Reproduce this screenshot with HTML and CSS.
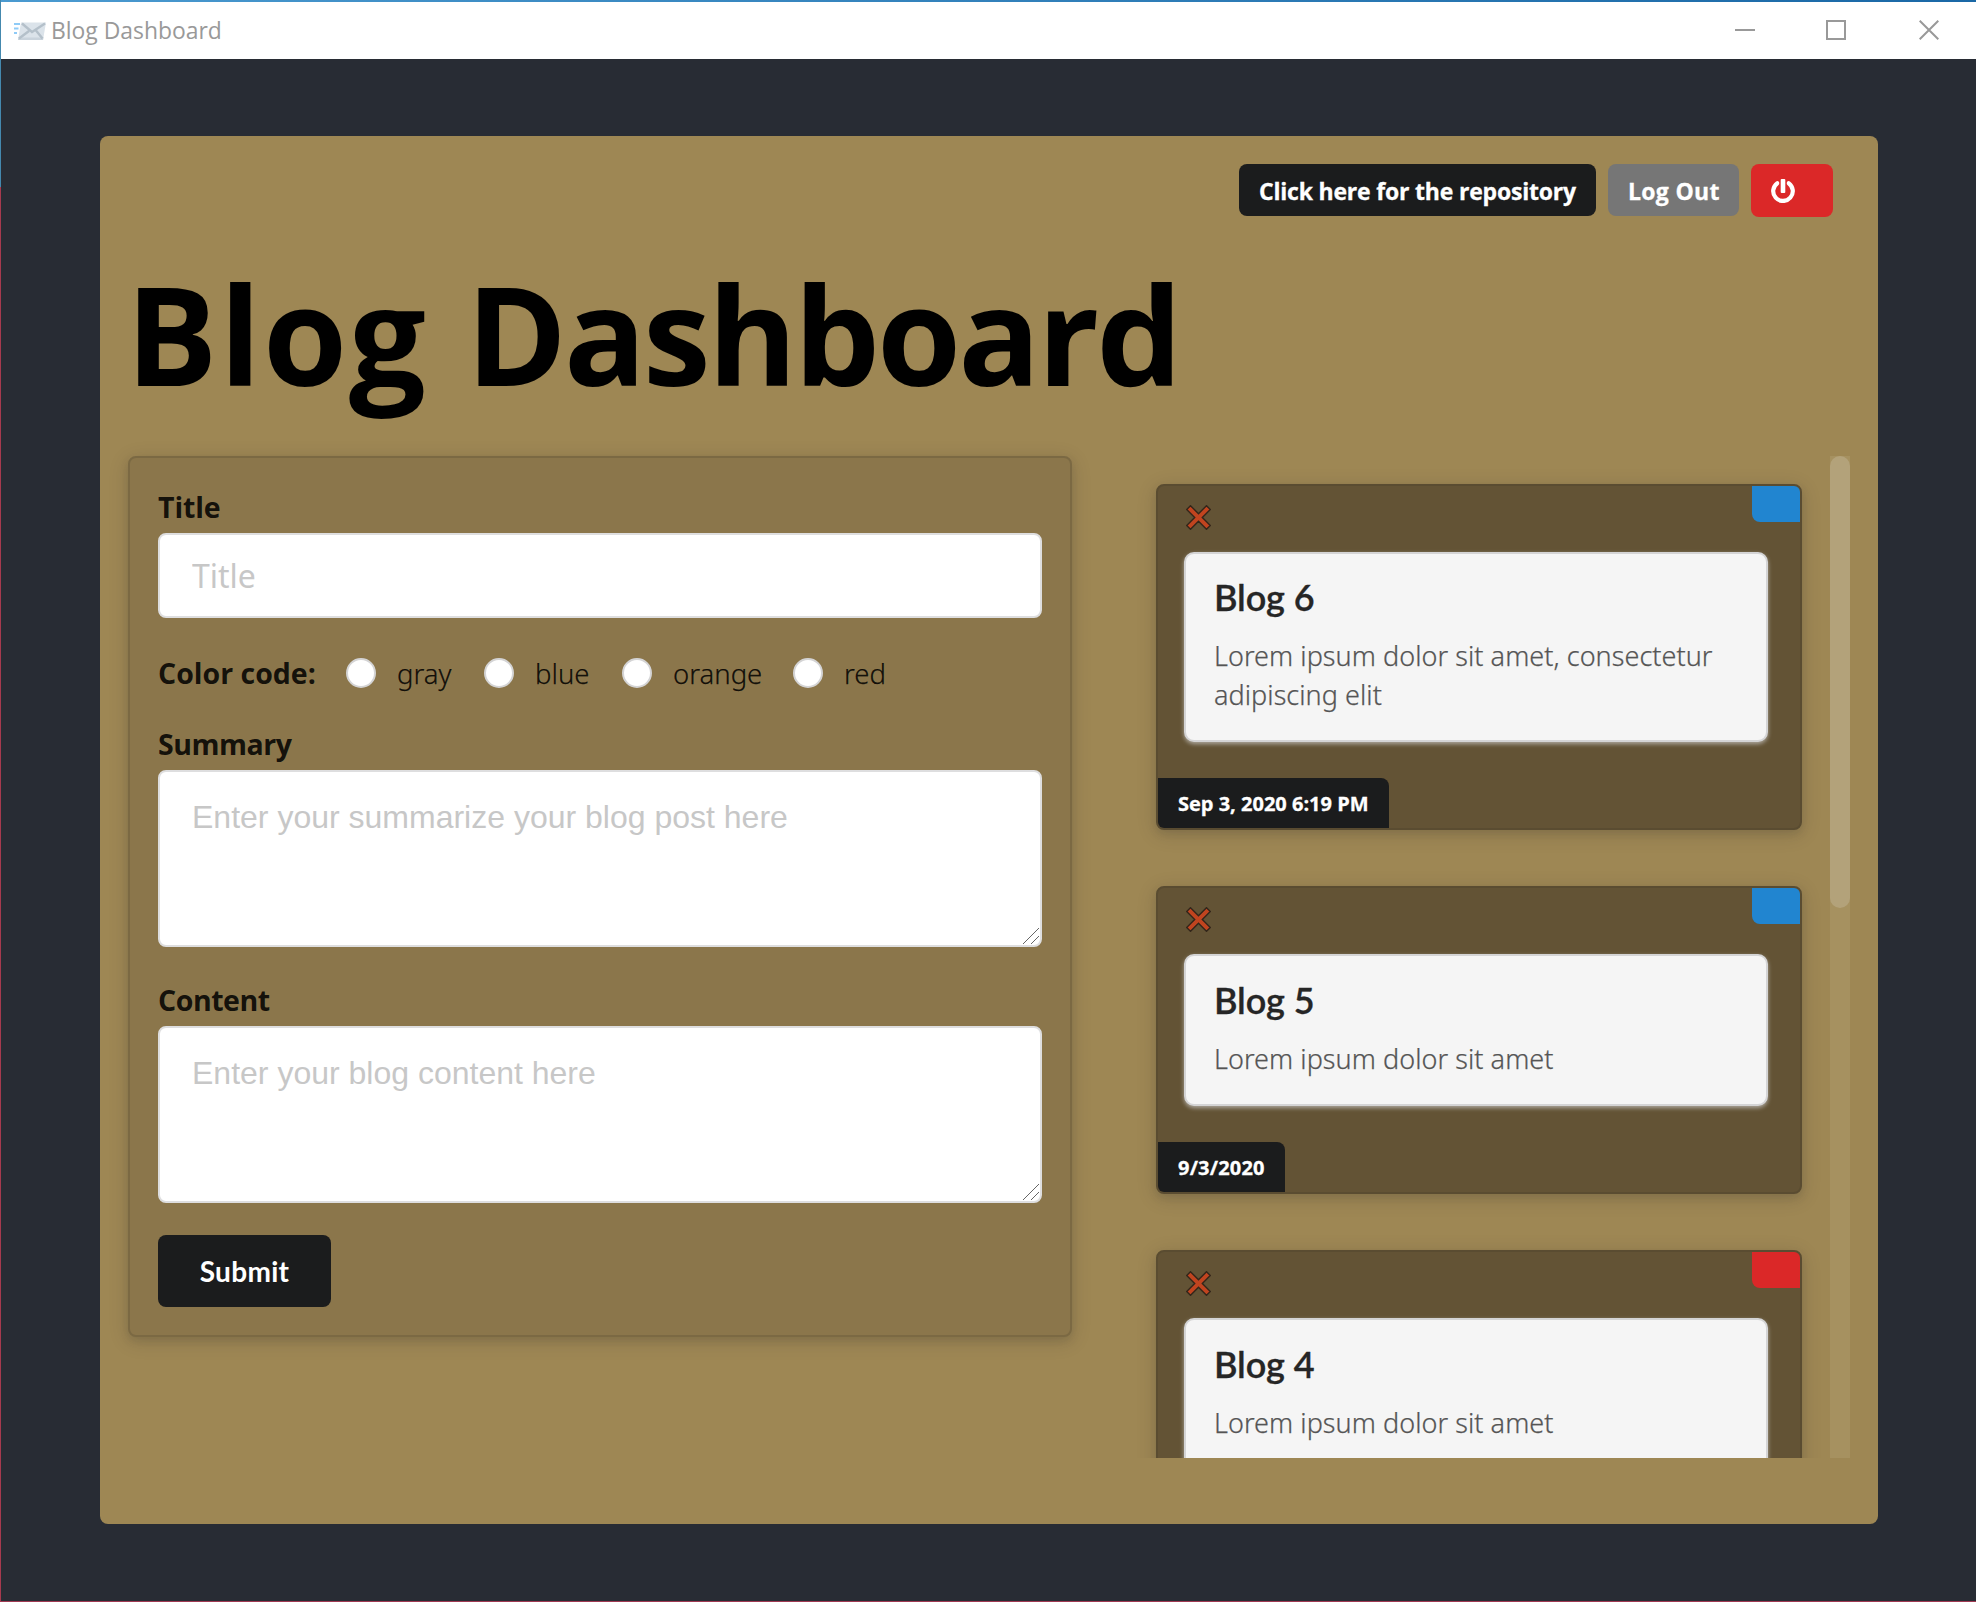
FILE: index.html
```html
<!DOCTYPE html>
<html lang="en">
<head>
<meta charset="utf-8">
<title>Blog Dashboard</title>
<link rel="stylesheet" href="styles.css">
</head>
<body>
<div class="window">
  <header class="titlebar">
    <svg class="app-icon" width="32" height="20" viewBox="0 0 32 20">
      <path d="M7 1.500h25l-3 17.500H4z" fill="#dbe3ea"/>
      <path d="M4.500 16.500h25l-.5 2.500H4z" fill="#c9d3dc"/>
      <path d="M8 2.500l10 8.500L31 2.500M5 17.500l10-7.500M28.500 17.500L22 9.500" fill="none" stroke="#b4c0ca" stroke-width="2.400"/>
      <path d="M0 3h6M0 7.500h4.500M0 12h3" stroke="#8fcbf7" stroke-width="2"/>
    </svg>
    <span class="window-title">Blog Dashboard</span>
    <div class="window-controls">
      <svg width="20" height="20" viewBox="0 0 20 20"><path d="M0 10h20"/></svg>
      <svg width="20" height="20" viewBox="0 0 20 20"><path d="M1 1h18v18H1z"/></svg>
      <svg width="20" height="20" viewBox="0 0 20 20"><path d="M.7.7l18.600 18.600M19.300.7L.7 19.300"/></svg>
    </div>
  </header>

  <main class="panel">
    <nav class="actions">
      <a class="label black">Click here for the repository</a>
      <a class="label grey">Log Out</a>
      <a class="label red">
        <svg width="24" height="24" viewBox="0 0 24 24">
          <path d="M6.300 4.200a9.800 9.800 0 1 0 11.400 0" fill="none" stroke="#fff" stroke-width="4.200" stroke-linecap="round"/>
          <rect x="8.500" y="-1" width="7" height="13" fill="#db2828"/>
          <rect x="9.700" y="0" width="4.600" height="14" rx="1" fill="#fff"/>
        </svg>
      </a>
    </nav>
    <h1><span class="word-one">Blog</span> <span class="word-two">Dashboard</span></h1>

    <div class="columns">
      <form class="segment">
        <label class="field-label title-label" for="title">Title</label>
        <input class="control title-input" id="title" type="text" placeholder="Title">
        <div class="radios">
          <span class="field-label">Color code:</span>
          <label class="radio gray"><i></i>gray</label>
          <label class="radio blue"><i></i>blue</label>
          <label class="radio orange"><i></i>orange</label>
          <label class="radio"><i></i>red</label>
        </div>
        <label class="field-label" for="summary">Summary</label>
        <div class="area">
          <textarea class="control" id="summary" placeholder="Enter your summarize your blog post here"></textarea>
          <svg class="grip" width="16" height="16" viewBox="0 0 16 16"><path d="M0 16L16 0M8 16l8-8"/></svg>
        </div>
        <label class="field-label" for="content">Content</label>
        <div class="area">
          <textarea class="control" id="content" placeholder="Enter your blog content here"></textarea>
          <svg class="grip" width="16" height="16" viewBox="0 0 16 16"><path d="M0 16L16 0M8 16l8-8"/></svg>
        </div>
        <button class="submit" type="button">Submit</button>
      </form>

      <section class="posts">
        <article class="post">
          <div class="post-top">
            <svg class="remove" width="25" height="25" viewBox="0 0 25 25"><path d="M4.500.7L12.500 8.700 20.500.7 24.300 4.500 16.300 12.500 24.300 20.500 20.500 24.300 12.500 16.300 4.500 24.300.7 20.500 8.700 12.500.7 4.500z"/></svg>
            <span class="tag blue-tag"></span>
          </div>
          <div class="card"><h2>Blog 6</h2><p>Lorem ipsum dolor sit amet, consectetur adipiscing elit</p></div>
          <span class="date">Sep 3, 2020 6:19 PM</span>
        </article>
        <article class="post">
          <div class="post-top">
            <svg class="remove" width="25" height="25" viewBox="0 0 25 25"><path d="M4.500.7L12.500 8.700 20.500.7 24.300 4.500 16.300 12.500 24.300 20.500 20.500 24.300 12.500 16.300 4.500 24.300.7 20.500 8.700 12.500.7 4.500z"/></svg>
            <span class="tag blue-tag"></span>
          </div>
          <div class="card"><h2>Blog 5</h2><p>Lorem ipsum dolor sit amet</p></div>
          <span class="date short">9/3/2020</span>
        </article>
        <article class="post">
          <div class="post-top">
            <svg class="remove" width="25" height="25" viewBox="0 0 25 25"><path d="M4.500.7L12.500 8.700 20.500.7 24.300 4.500 16.300 12.500 24.300 20.500 20.500 24.300 12.500 16.300 4.500 24.300.7 20.500 8.700 12.500.7 4.500z"/></svg>
            <span class="tag red-tag"></span>
          </div>
          <div class="card"><h2>Blog 4</h2><p>Lorem ipsum dolor sit amet</p></div>
        </article>
      </section>
      <div class="scrollbar"><div class="thumb"></div></div>
    </div>
  </main>
</div>
</body>
</html>
```
FILE: styles.css
```css
* { box-sizing: border-box; }

body {
  margin: 0;
  font-family: "Noto Sans", "Open Sans", sans-serif;
  color: rgba(0, 0, 0, .87);
}

.window {
  height: 1602px;
  border-bottom: 1px solid #a03a52;
  padding-left: 1px;
  background: linear-gradient(#4488ae 0 187px, #a63a4e 187px) 0 0 / 1px 100% no-repeat, #282c34;
  overflow: hidden;
}

.titlebar {
  display: flex;
  align-items: center;
  height: 59px;
  margin-left: -1px;
  padding: 2px 37px 0 13px;
  border-left: 1px solid #4488ae;
  background: linear-gradient(90deg, #4a9ad0, #1a68a6) 0 0 / 100% 2px no-repeat, #fff;
}

.window-title {
  margin: 1px 0 0 5px;
  font: 400 22.9px/30px "Open Sans", sans-serif;
  color: #999;
}

.window-controls {
  display: flex;
  gap: 71px;
  margin: 0 0 1px auto;
}

.window-controls svg {
  fill: none;
  stroke: #999;
  stroke-width: 2;
}

.window-controls svg:last-child { margin-left: 2px; }

.panel {
  width: 1778px;
  height: 1388px;
  margin: 77px 0 0 99px;
  padding: 28px;
  border-radius: 8px;
  background: #9e8754;
}

.actions {
  display: flex;
  gap: 12px;
  height: 53px;
  padding-right: 17px;
  justify-content: flex-end;
  align-items: flex-start;
}

.label {
  height: 52px;
  padding: 0 20px;
  border-radius: 8px;
  font: 700 23px/54px "Open Sans", sans-serif;
  -webkit-text-stroke: .3px;
  white-space: nowrap;
  color: #fff;
}

.label.black { width: 357px; background: #1b1c1d; letter-spacing: -.2px; }
.label.grey { width: 131px; background: #767676; letter-spacing: .3px; }
.label.red { display: block; width: 82px; height: 53px; background: #db2828; }
.label.red svg { display: block; margin-top: 15px; }

h1 {
  height: 239px;
  margin: 0 0 0 -2px;
  font: 700 136px/234px "Open Sans", sans-serif;
  white-space: nowrap;
  color: #000;
}

.word-one { letter-spacing: 2px; }
.word-two { margin-left: 3px; letter-spacing: -3px; }

.columns {
  display: flex;
  height: 1002px;
  align-items: flex-start;
}

.segment {
  display: flex;
  flex-direction: column;
  width: 944px;
  height: 881px;
  padding: 28px;
  border: 2px solid #7b6943;
  border-radius: 8px;
  background: #8b764b;
  box-shadow: 0 4px 8px rgba(34, 36, 38, .12), 0 4px 20px rgba(34, 36, 38, .15);
}

.field-label {
  height: 47px;
  font: 700 28.5px/42px "Open Sans", sans-serif;
  letter-spacing: -.45px;
}

.title-label { letter-spacing: -.1px; }

.area {
  position: relative;
  height: 177px;
  margin-bottom: 32px;
}

.control {
  display: block;
  flex: none;
  width: 884px;
  height: 177px;
  margin: 0;
  padding: 24px 32px;
  border: 2px solid #dededf;
  border-radius: 8px;
  background: #fff;
  font: 400 32px/42px "Liberation Sans", sans-serif;
  outline: 0;
  resize: none;
}

.grip {
  position: absolute;
  right: 3px;
  bottom: 3px;
  fill: none;
  stroke: #666;
  stroke-width: 1;
}

.title-input { height: 85px; margin-bottom: 32px; font-family: "Noto Sans", sans-serif; }
.control::placeholder { color: #c7c7c7; opacity: 1; }

.radios {
  display: flex;
  height: 73px;
  font: 330 27.5px/48px "Noto Sans", sans-serif;
  -webkit-text-stroke: .25px;
}

.radios .field-label { width: 188px; line-height: 47px; letter-spacing: 0; -webkit-text-stroke: 0; }

.radio { display: flex; }
.radio i {
  width: 30px;
  height: 30px;
  margin: 8px 21px 0 0;
  border: 2px solid #d4d4d5;
  border-radius: 50%;
  background: #fff;
}
.radio.gray, .radio.blue { width: 138px; }
.radio.orange { width: 171px; }

.submit {
  width: 173px;
  height: 72px;
  padding: 0;
  border: 0;
  border-radius: 8px;
  background: #1b1c1d;
  color: #fff;
  font: 700 28px/72px Lato, sans-serif;
  letter-spacing: .3px;
}

.posts {
  display: flex;
  flex-direction: column;
  gap: 56px;
  width: 758px;
  height: 1002px;
  padding: 28px 28px 0 84px;
  overflow: hidden;
}

.post {
  flex: none;
  width: 646px;
  border: 2px solid #5a4c31;
  border-radius: 8px;
  background: #635335;
  box-shadow: 0 4px 8px rgba(34, 36, 38, .12), 0 4px 20px rgba(34, 36, 38, .15);
  overflow: hidden;
}

.post-top {
  display: flex;
  justify-content: space-between;
  height: 66px;
  padding-left: 28px;
}

.remove { margin-top: 19px; fill: #c1441f; stroke: #33261a; stroke-width: 1.4; }

.tag { width: 48px; height: 36px; border-radius: 0 0 0 8px; }
.blue-tag { background: #2185d0; }
.red-tag { background: #db2828; }

.card {
  width: 584px;
  margin: 0 0 36px 26px;
  padding: 21px 28px 26px;
  border: 2px solid #d4d4d5;
  border-radius: 10px;
  background: #f5f5f5;
  box-shadow: 0 2px 4px #d4d4d5aa;
}

.card h2 {
  margin: 0;
  font: 600 36px/44px Lato, sans-serif;
  letter-spacing: -.1px;
  -webkit-text-stroke: .3px;
  color: #262626;
}

.card p {
  margin: 17px 0 0;
  font: 330 27px/39px "Noto Sans", sans-serif;
  letter-spacing: .05px;
  -webkit-text-stroke: .25px;
  color: #555;
}

.post:nth-child(n+2) .card { padding-top: 22px; }

.date {
  display: block;
  width: 231px;
  height: 50px;
  padding-left: 20px;
  border-radius: 0 8px 0 0;
  background: #1b1c1d;
  color: #fff;
  font: 700 20px/51px "Open Sans", sans-serif;
  -webkit-text-stroke: .3px;
  white-space: nowrap;
}
.date.short { width: 127px; letter-spacing: .2px; }

.scrollbar { width: 20px; height: 1002px; background: #a69160; }
.thumb { height: 452px; border-radius: 10px; background: #b3a27a; }
```
